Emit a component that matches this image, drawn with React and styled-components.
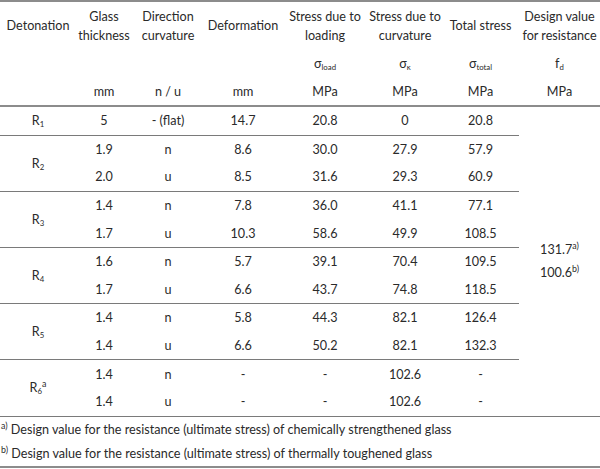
import React from 'react';
import styled, { createGlobalStyle } from 'styled-components';

const GlobalStyle = createGlobalStyle`
  html, body {
    margin: 0;
    padding: 0;
    background: #ffffff;
  }
  body {
    font-family: Lato, "Open Sans", "Liberation Sans", sans-serif;
    color: #2a2a2a;
  }
`;

const Table = styled.table`
  width: 600px;
  border-collapse: collapse;
  table-layout: fixed;
  font-size: 12.6px;
  border-top: 2px solid #8c8c8c;
  border-bottom: 2px solid #8c8c8c;
`;

const Head = styled.th`
  font-weight: 400;
  text-align: center;
  vertical-align: middle;
  padding: 0;
  line-height: 19px;
  height: ${({ $h }) => $h}px;
  border-bottom: ${({ $last }) => ($last ? '2px solid #8c8c8c' : 'none')};
`;

const Cell = styled.td`
  text-align: center;
  vertical-align: middle;
  padding: 0;
  height: 27.6px;
  border-top: ${({ $top }) => ($top ? '1px solid #7a7a7a' : 'none')};
`;

const DesignCell = styled.td`
  text-align: center;
  vertical-align: middle;
  padding: 0;
  line-height: 23px;
  border-bottom: 1px solid #7a7a7a;
`;

const Note = styled.td`
  text-align: left;
  padding: 0 0 0 1px;
  height: ${({ $top }) => ($top ? 25 : 24)}px;
  vertical-align: middle;
  border-top: ${({ $top }) => ($top ? '1px solid #7a7a7a' : 'none')};
`;

const Sub = styled.sub`
  font-size: 0.62em;
  vertical-align: -0.25em;
  line-height: 0;
`;

const Sup = styled.sup`
  font-size: 0.7em;
  vertical-align: 0.6em;
  line-height: 0;
`;

const widths = [76, 56, 72, 78, 86, 74, 77, 81];

const titles = [
  ['Detonation'],
  ['Glass', 'thickness'],
  ['Direction', 'curvature'],
  ['Deformation'],
  ['Stress due to', 'loading'],
  ['Stress due to', 'curvature'],
  ['Total stress'],
  ['Design value', 'for resistance'],
];

const symbols = [
  null,
  null,
  null,
  null,
  ['σ', 'load'],
  ['σ', 'κ'],
  ['σ', 'total'],
  ['f', 'd'],
];

const units = ['', 'mm', 'n / u', 'mm', 'MPa', 'MPa', 'MPa', 'MPa'];

const groups = [
  { id: '1', rows: [['5', '- (flat)', '14.7', '20.8', '0', '20.8']] },
  {
    id: '2',
    rows: [
      ['1.9', 'n', '8.6', '30.0', '27.9', '57.9'],
      ['2.0', 'u', '8.5', '31.6', '29.3', '60.9'],
    ],
  },
  {
    id: '3',
    rows: [
      ['1.4', 'n', '7.8', '36.0', '41.1', '77.1'],
      ['1.7', 'u', '10.3', '58.6', '49.9', '108.5'],
    ],
  },
  {
    id: '4',
    rows: [
      ['1.6', 'n', '5.7', '39.1', '70.4', '109.5'],
      ['1.7', 'u', '6.6', '43.7', '74.8', '118.5'],
    ],
  },
  {
    id: '5',
    rows: [
      ['1.4', 'n', '5.8', '44.3', '82.1', '126.4'],
      ['1.4', 'u', '6.6', '50.2', '82.1', '132.3'],
    ],
  },
  {
    id: '6',
    sup: 'a',
    rows: [
      ['1.4', 'n', '-', '-', '102.6', '-'],
      ['1.4', 'u', '-', '-', '102.6', '-'],
    ],
  },
];

const bodyRowCount = groups.reduce((n, g) => n + g.rows.length, 0);

export default function App() {
  return (
    <>
      <GlobalStyle />
      <Table>
        <colgroup>
          {widths.map((w, i) => (
            <col key={i} style={{ width: w }} />
          ))}
        </colgroup>
        <thead>
          <tr>
            {titles.map((t, i) => (
              <Head key={i} $h={47}>
                {t.map((line, j) => (
                  <div key={j}>{line}</div>
                ))}
              </Head>
            ))}
          </tr>
          <tr>
            {symbols.map((s, i) => (
              <Head key={i} $h={28}>
                {s && (
                  <>
                    {s[0]}
                    <Sub>{s[1]}</Sub>
                  </>
                )}
              </Head>
            ))}
          </tr>
          <tr>
            {units.map((u, i) => (
              <Head key={i} $h={28} $last>
                {u}
              </Head>
            ))}
          </tr>
        </thead>
        <tbody>
          {groups.map((g, gi) =>
            g.rows.map((r, ri) => (
              <tr key={`${g.id}-${ri}`}>
                {ri === 0 && (
                  <Cell rowSpan={g.rows.length} $top={gi > 0}>
                    R<Sub>{g.id}</Sub>
                    {g.sup && <Sup>{g.sup}</Sup>}
                  </Cell>
                )}
                {r.map((v, ci) => (
                  <Cell key={ci} $top={gi > 0 && ri === 0}>
                    {v}
                  </Cell>
                ))}
                {gi === 0 && ri === 0 && (
                  <DesignCell rowSpan={bodyRowCount}>
                    <div>
                      131.7<Sup>a)</Sup>
                    </div>
                    <div>
                      100.6<Sup>b)</Sup>
                    </div>
                  </DesignCell>
                )}
              </tr>
            ))
          )}
          <tr>
            <Note colSpan={8} $top>
              <Sup>a)</Sup> Design value for the resistance (ultimate stress) of chemically strengthened glass
            </Note>
          </tr>
          <tr>
            <Note colSpan={8}>
              <Sup>b)</Sup> Design value for the resistance (ultimate stress) of thermally toughened glass
            </Note>
          </tr>
        </tbody>
      </Table>
    </>
  );
}
